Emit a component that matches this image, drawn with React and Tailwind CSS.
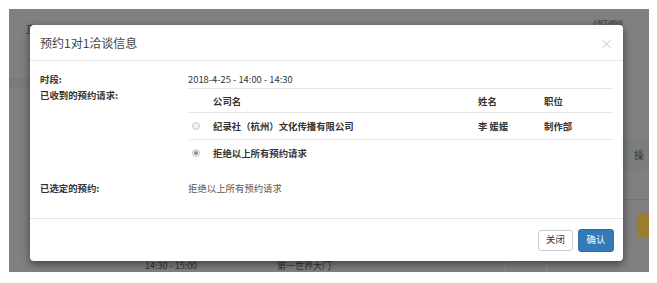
import React from "react";

const font = { fontFamily: '"Noto Sans CJK SC", "Noto Sans", sans-serif' };

function Radio({ checked }) {
  return (
    <span className="flex h-[8px] w-[8px] items-center justify-center rounded-full border border-[#c8c8c8] bg-[#f2f2f2]">
      {checked && <span className="h-[4px] w-[4px] rounded-full bg-[#8a8a8a]" />}
    </span>
  );
}

export default function App() {
  const rows = [
    { company: "纪录社（杭州）文化传播有限公司", name: "李 媛媛", pos: "制作部", checked: false },
    { company: "拒绝以上所有预约请求", name: "", pos: "", checked: true },
  ];

  return (
    <div className="h-[283px] w-[657px] bg-white pl-[9px] pt-[9px]" style={font}>
      <div className="relative h-[263px] w-[640px] overflow-hidden bg-[#808080]">
        {/* page behind the backdrop */}
        <div className="absolute left-0 top-[69px] h-[10px] w-[21px] bg-[#7a7a7a]" />
        <div className="absolute left-[17px] top-[15px] text-[10px] leading-none text-[#333]">直</div>
        <div className="absolute left-[584px] top-[10px] text-[5px] leading-none text-[#2a2a2a]">小智互动科技</div>
        <div className="absolute left-[614px] top-[129px] flex h-[32px] w-[26px] items-center bg-[#7b7d7d] pl-[11px] text-[10px] text-[#333]">操</div>
        <div className="absolute left-[614px] top-[190px] h-px w-[26px] bg-[#747474]" />
        <div className="absolute left-[628px] top-[204px] h-[24px] w-[12px] rounded-l-[2px] bg-[#9c7d2e]" />
        <div className="absolute left-[136px] top-[252px] text-[9px] leading-none text-[#333]">14:30 - 15:00</div>
        <div className="absolute left-[268px] top-[252px] text-[9px] leading-none text-[#333]">第一世界大门</div>
        <div className="absolute left-[496px] top-[253px] h-[12px] w-[42px] rounded-[2px] border border-[#8c8c8c]" />

        {/* modal */}
        <div className="absolute left-[21px] top-[16px] flex h-[236px] w-[593px] flex-col rounded-[4px] bg-white shadow-[0_3px_9px_rgba(0,0,0,0.5)]">
          <div className="flex h-[36px] items-center justify-between border-b border-[#e5e5e5] pl-[10px] pr-[10px]">
            <span className="text-[12px] leading-none text-[#444]">预约1对1洽谈信息</span>
            <span className="text-[13px] leading-none text-[#cfcfcf]">×</span>
          </div>

          <div className="flex h-[157px] flex-col px-[10px] pt-[11px] text-[9.4px] leading-[14px] text-[#333]">
            <div className="grid h-[16px] grid-cols-[148px_1fr]">
              <span className="font-bold">时段:</span>
              <span>2018-4-25 - 14:00 - 14:30</span>
            </div>
            <div className="grid grid-cols-[148px_1fr]">
              <span className="font-bold">已收到的预约请求:</span>
              <div className="flex flex-col">
                <div className="grid h-[25px] grid-cols-[25px_265px_66px_1fr] items-center border-y border-[#e6e6e6] font-bold">
                  <span />
                  <span>公司名</span>
                  <span>姓名</span>
                  <span>职位</span>
                </div>
                {rows.map((r, i) => (
                  <div
                    key={i}
                    className={`grid grid-cols-[25px_265px_66px_1fr] items-center font-bold ${
                      i === 0 ? "h-[27px] border-b border-[#ececec]" : "h-[25px]"
                    }`}
                  >
                    <span className="flex pl-[4px]">
                      <Radio checked={r.checked} />
                    </span>
                    <span>{r.company}</span>
                    <span>{r.name}</span>
                    <span>{r.pos}</span>
                  </div>
                ))}
              </div>
            </div>
            <div className="mt-[16px] grid grid-cols-[148px_1fr]">
              <span className="font-bold">已选定的预约:</span>
              <span className="text-[#555]">拒绝以上所有预约请求</span>
            </div>
          </div>

          <div className="flex flex-1 items-center justify-end gap-[5px] border-t border-[#e5e5e5] pr-[9px] text-[9.4px] leading-none">
            <button className="h-[21px] w-[35px] rounded-[3px] border border-[#cccccc] bg-white text-[#333]">关闭</button>
            <button className="h-[23px] w-[36px] rounded-[3px] border border-[#2e6da4] bg-[#337ab7] text-white">确认</button>
          </div>
        </div>
      </div>
    </div>
  );
}
